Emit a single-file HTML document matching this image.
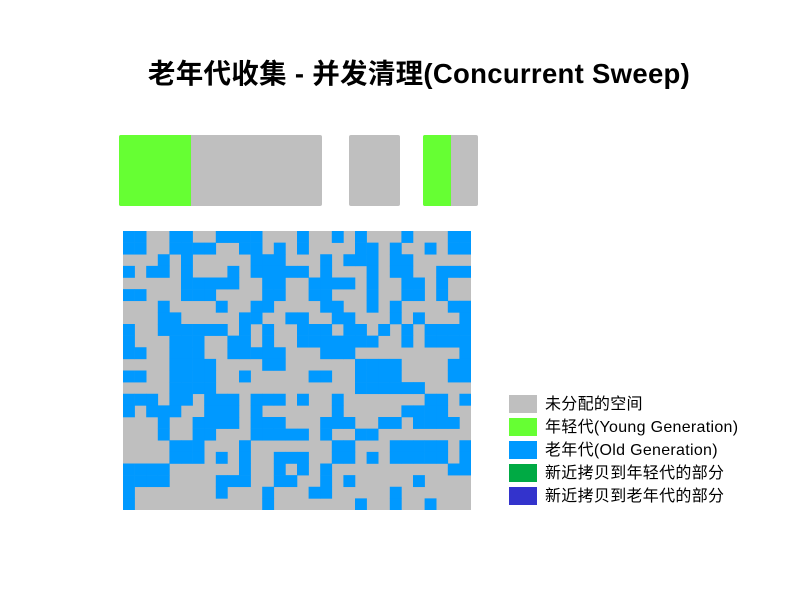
<!DOCTYPE html>
<html><head><meta charset="utf-8"><style>
body{margin:0;width:785px;height:593px;background:#fff;position:relative;overflow:hidden;font-family:"Liberation Sans","Noto Sans CJK SC",sans-serif}
.t{position:absolute;left:0;width:838px;top:51px;text-align:center;font-size:27.5px;font-weight:bold;color:#000;letter-spacing:0.3px}
.b{position:absolute;border-radius:2px}
.lg{position:absolute;left:509px;width:28px;height:18px}
.lt{position:absolute;left:545px;font-size:16px;color:#000;line-height:18px;letter-spacing:0.3px;margin-top:1px}
</style></head><body>
<div class="t">老年代收集 - 并发清理(Concurrent Sweep)</div>
<div class="b" style="left:119px;top:135px;width:203px;height:71px;background:#bfbfbf"></div>
<div class="b" style="left:119px;top:135px;width:72px;height:71px;background:#66ff33;border-radius:2px 0 0 2px"></div>
<div class="b" style="left:349px;top:135px;width:51px;height:71px;background:#bfbfbf"></div>
<div class="b" style="left:423px;top:135px;width:55px;height:71px;background:#bfbfbf"></div>
<div class="b" style="left:423px;top:135px;width:28px;height:71px;background:#66ff33;border-radius:2px 0 0 2px"></div>
<svg id="g" style="position:absolute;left:123px;top:231px" width="348" height="279"><rect width="348" height="279" fill="#bfbfbf"/></svg>
<div class="lg" style="top:395px;background:#bfbfbf"></div><div class="lt" style="top:395px">未分配的空间</div>
<div class="lg" style="top:418px;background:#66ff33"></div><div class="lt" style="top:418px">年轻代(Young Generation)</div>
<div class="lg" style="top:441px;background:#0099ff"></div><div class="lt" style="top:441px">老年代(Old Generation)</div>
<div class="lg" style="top:464px;background:#00aa44"></div><div class="lt" style="top:464px">新近拷贝到年轻代的部分</div>
<div class="lg" style="top:487px;background:#3333cc"></div><div class="lt" style="top:487px">新近拷贝到老年代的部分</div>
<script>
var L=["BBGGBBGGBBBBGGG","BBGGBBBBGGBBGBG","GGGBGBGGGGGBBBG","BGBBGBGGGBGBBBB","GGGGGBBBBBGGBBG","BBGGGBBBGGGGBBG","GGGBGGGGBGGBBGG","GGGBBGGGGGBBGGB","BGGBBBBBBGBGBGG","BGGGBBBGGBBGBGG","BBGGBBBGGBBBBBG","GGGGBBBBGGGGBBG","BBGGBBBBGGBGGGG","GGGGBBBBGGGGGGG","BBBGBBGBBBGBBBG","BGBBBGGBBBGBGGG","GGGBGGBBBBGBBBG","GGGBGGBBGGGBBBB","GGGGBBBGGGBGGGG","GGGGBBBGBGBGGBB","BBBBGGGGGGBGGBG","BBBBGGGGBBBGGBB","BGGGGGGGBGGGBGG","BGGGGGGGGGGGBGG"];
var R=["BGGBGBGGGBGGGBB","BGGGGBBGBGGBGBB","GGBGBBBGBBGGGGG","BGBGGGBGBBGGBBB","GBBBBGBGGBBGBGG","GBBGGGBGGBBGBGG","GGBBGGBGBGGGGBB","BGGBBGGGBGBGGGB","BBBGBBGBGBGBBBB","BBBBBBBGGBGBBBB","GGBBBGGGGGGGGGB","GGGGGBBBBGGGGBB","GBBGGBBBBGGGGBB","GGGGGBBBBBBGGGG","BGGBGGGGGGGBBGB","GGGBGGGGGBBBBGG","GGBBBGGBBGBBBBG","BGBGGBBGGGGGGGG","GGGBBGGGBBBBBGB","BGGBBGBGBBBBBGB","BGBGGGGGGGGGGBB","GGBGBGGGGGBGGGG","GBBGGGGGBGGGGGG","GGGGGBGGBGGBGGG"];
var s="",w=11.6,h=11.625;
for(var r=0;r<24;r++){var row=L[r]+R[r];for(var c=0;c<30;c++)if(row[c]=="B")s+='<rect x="'+(c*w)+'" y="'+(r*h)+'" width="'+(w+0.3)+'" height="'+(h+0.3)+'" fill="#0099ff"/>';}
document.getElementById("g").insertAdjacentHTML("beforeend",s);
</script>
</body></html>
